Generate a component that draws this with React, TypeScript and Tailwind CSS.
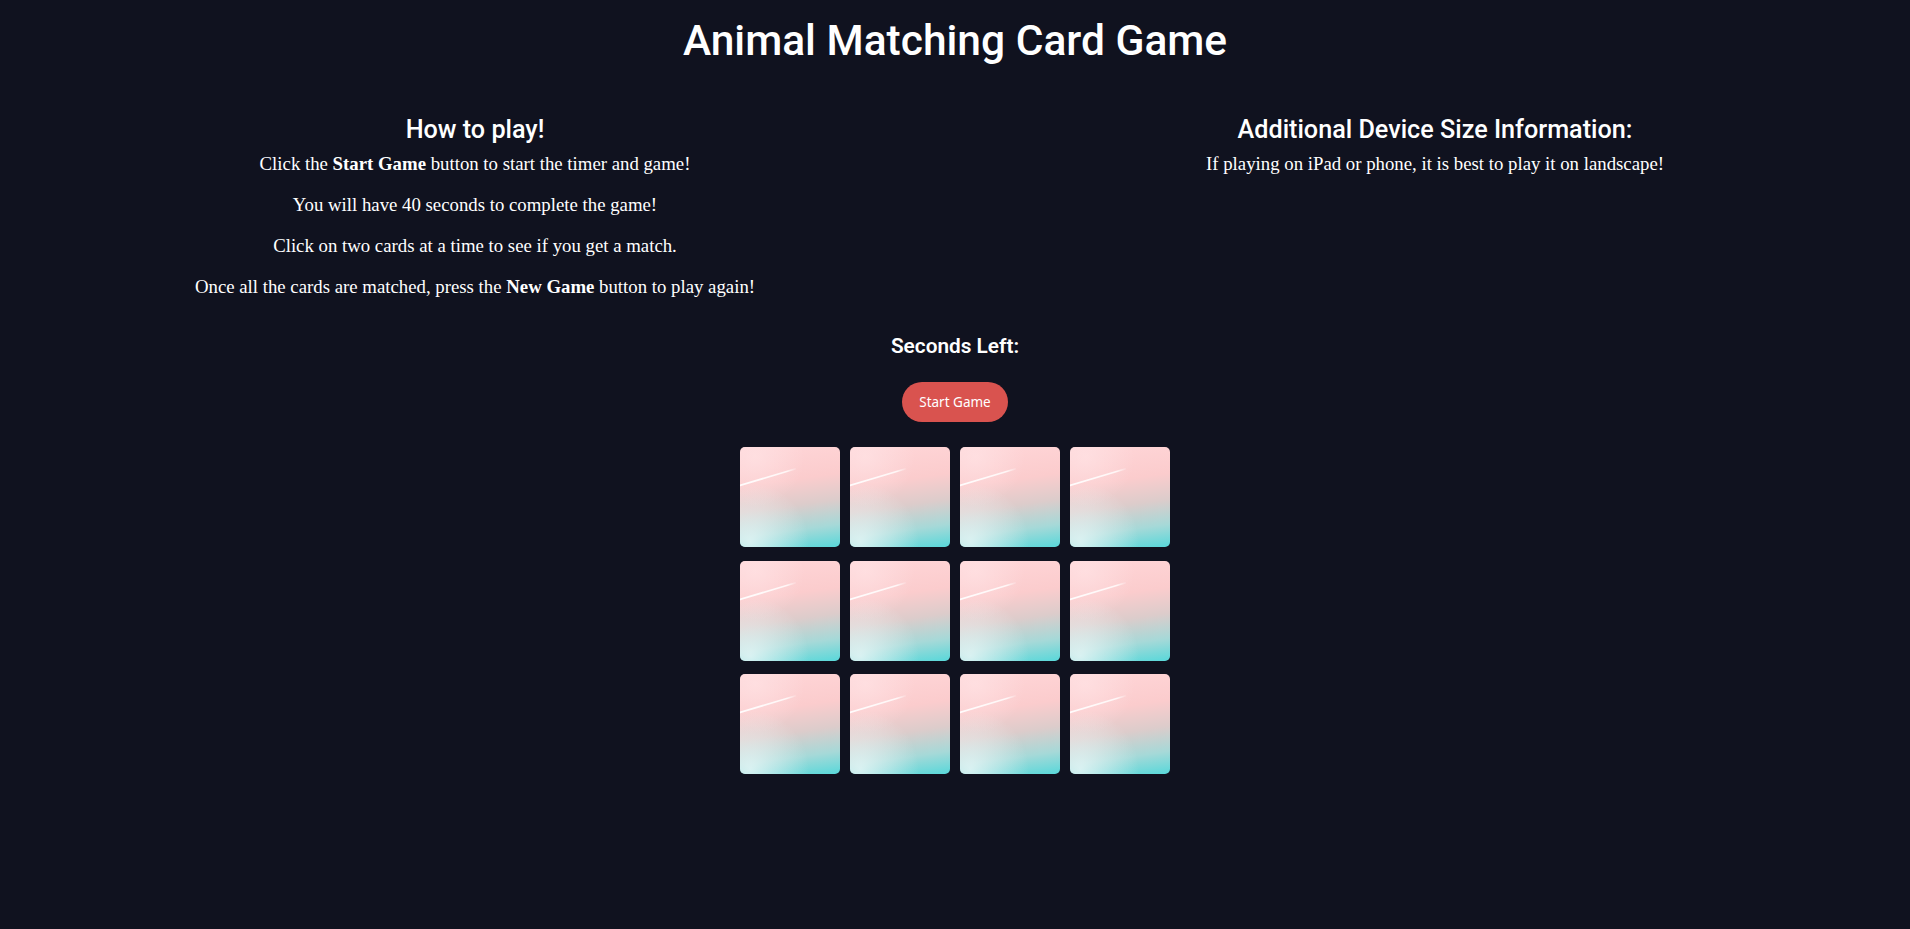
import React from "react";

const cards = Array.from({ length: 12 }, (_, i) => i);

const CardBack = () => {
  return (
    <div className="relative w-[100px] h-[100px] overflow-hidden rounded-[5px] bg-[linear-gradient(172deg,#ffd6d8_0%,#fbcccd_35%,#dccccb_58%,#a6d9d8_80%,#58d8da_100%)]">
      <div className="absolute inset-0 bg-[radial-gradient(circle_at_10%_95%,rgba(240,250,250,0.75)_0%,rgba(240,250,250,0)_45%)]" />
      <div className="absolute inset-0 bg-[radial-gradient(circle_at_15%_10%,rgba(255,230,232,0.6)_0%,rgba(255,230,232,0)_40%)]" />
      <svg className="absolute inset-0" width="100" height="100" viewBox="0 0 100 100">
        <defs>
          <linearGradient id="streak" x1="0" y1="0" x2="1" y2="0">
            <stop offset="0%" stopColor="#fff" stopOpacity="0.95" />
            <stop offset="85%" stopColor="#fff" stopOpacity="0.8" />
            <stop offset="100%" stopColor="#fff" stopOpacity="0.2" />
          </linearGradient>
        </defs>
        <line x1="0" y1="38.5" x2="55" y2="22" stroke="url(#streak)" strokeWidth="1.8" strokeLinecap="round" />
      </svg>
    </div>
  );
};

export default function App() {
  return (
    <div className="min-h-screen bg-[#10121f] text-white pb-10">
      <h1 className="pt-[14px] text-center font-['Roboto',sans-serif] text-[42.5px] font-medium leading-[53px]">
        Animal Matching Card Game
      </h1>

      <div className="mt-[47px] grid grid-cols-2 gap-x-[10px] text-center">
        <div className="flex flex-col items-center">
          <h2 className="font-['Roboto',sans-serif] text-[25.2px] font-medium leading-[32px]">How to play!</h2>
          <div className="mt-[6px] flex flex-col gap-[17px] font-['Liberation_Serif',serif] text-[18.8px] leading-[24px]">
            <p>
              Click the <strong>Start Game</strong> button to start the timer and game!
            </p>
            <p>You will have 40 seconds to complete the game!</p>
            <p>Click on two cards at a time to see if you get a match.</p>
            <p>
              Once all the cards are matched, press the <strong>New Game</strong> button to play again!
            </p>
          </div>
        </div>
        <div className="flex flex-col items-center">
          <h2 className="font-['Roboto',sans-serif] text-[25.2px] font-medium leading-[32px]">
            Additional Device Size Information:
          </h2>
          <p className="mt-[6px] font-['Liberation_Serif',serif] text-[18.8px] leading-[24px]">
            If playing on iPad or phone, it is best to play it on landscape!
          </p>
        </div>
      </div>

      <div className="mt-[35px] flex flex-col items-center">
        <h3 className="font-['Roboto',sans-serif] text-[20.8px] font-semibold leading-[24px]">Seconds Left:</h3>
        <button className="mt-[24px] h-[40px] w-[106px] rounded-full bg-[#d9534f] font-['Noto_Sans',sans-serif] text-[13.5px] text-white">
          Start Game
        </button>
        <div className="mt-[25px] grid grid-cols-[repeat(4,100px)] gap-x-[10px] gap-y-[13.5px]">
          {cards.map((c) => (
            <CardBack key={c} />
          ))}
        </div>
      </div>
    </div>
  );
}
